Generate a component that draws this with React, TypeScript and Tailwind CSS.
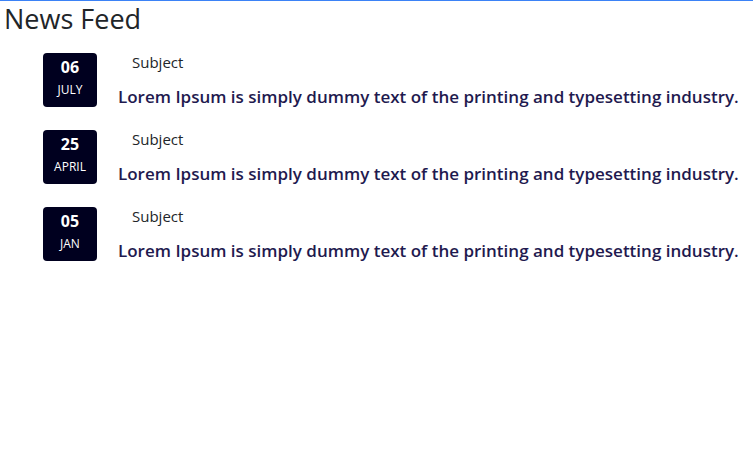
import React from "react";

const items = [
  { day: "06", month: "JULY" },
  { day: "25", month: "APRIL" },
  { day: "05", month: "JAN" },
];

export default function App() {
  return (
    <div className="w-[753px] h-[466px] bg-white border-t border-[#3b82f6] font-['Open_Sans',sans-serif]">
      <h2 className="text-[27px] leading-[34px] text-[#212529] pl-[4px] pt-[1px] font-normal">News Feed</h2>
      <div className="flex flex-col gap-[22px] pt-[17px] pl-[43px]">
        {items.map((it, i) => (
          <div key={i} className="flex items-start">
            <div className="w-[54px] h-[54px] rounded-[4px] bg-[#00001f] flex flex-col items-center text-white shrink-0">
              <div className="text-[16px] leading-[20px] font-bold mt-[4px]">{it.day}</div>
              <div className="text-[12px] leading-[16px] mt-[5px]">{it.month}</div>
            </div>
            <div className="flex flex-col pl-[21px]">
              <div className="text-[15px] leading-[20px] text-[#212529] pl-[14px] -mt-[1px]">Subject</div>
              <div className="text-[17px] leading-[22px] font-semibold text-[#1f1a4f] mt-[14px] whitespace-nowrap">
                Lorem Ipsum is simply dummy text of the printing and typesetting industry.
              </div>
            </div>
          </div>
        ))}
      </div>
    </div>
  );
}
